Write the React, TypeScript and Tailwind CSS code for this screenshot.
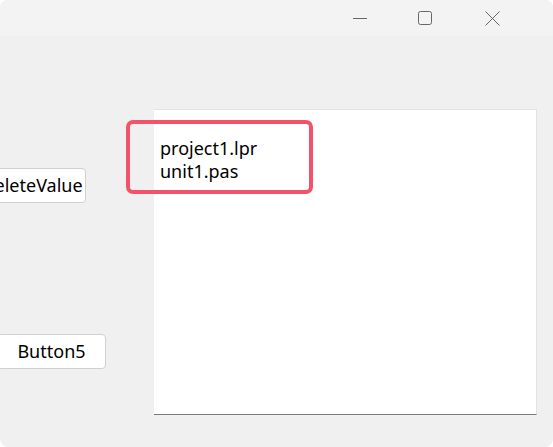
export default function App() {
  return (
    <div className="w-[553px] h-[447px] bg-white" style={{ fontFamily: '"Segoe UI", "Noto Sans", "Liberation Sans", sans-serif' }}>
      <div className="w-full h-full rounded-[8px] overflow-hidden bg-[#f0f0f0] flex flex-col">
        {/* title bar */}
        <div className="h-[36px] bg-[#f3f3f3] flex justify-end items-center shrink-0">
          <div className="w-[46px] h-full flex items-center justify-center">
            <svg width="14" height="14" viewBox="0 0 14 14"><line x1="0" y1="7.5" x2="14" y2="7.5" stroke="#666" strokeWidth="1" /></svg>
          </div>
          <div className="w-[46px] h-full ml-[19px] flex items-center justify-center">
            <svg width="14" height="14" viewBox="0 0 14 14"><rect x="0.5" y="0.5" width="13" height="13" rx="2" fill="none" stroke="#666" strokeWidth="1" /></svg>
          </div>
          <div className="w-[46px] h-full ml-[21px] mr-[38px] flex items-center justify-center">
            <svg width="15" height="15" viewBox="0 0 15 15"><path d="M0.5 0.5 L14.5 14.5 M14.5 0.5 L0.5 14.5" stroke="#666" strokeWidth="1" /></svg>
          </div>
        </div>

        {/* form body */}
        <div className="flex flex-1">
          <div className="w-[154px] shrink-0 flex flex-col">
            <button className="mt-[132px] ml-[-22px] w-[108px] h-[35px] bg-white border border-[#d0d0d0] rounded-[4px] text-[18px] text-black flex items-center justify-center whitespace-nowrap">
              DeleteValue
            </button>
            <button className="mt-[131px] ml-[-3px] w-[109px] h-[35px] bg-white border border-[#d0d0d0] rounded-[4px] text-[18px] text-black flex items-center justify-center">
              Button5
            </button>
          </div>
          <div className="mt-[73px] w-[383px] h-[306px] bg-white border-t border-t-[#e3e3e3] border-r border-r-[#e3e3e3] border-b border-b-[#7a7a7a] relative">
            <div className="pl-[6px] pt-[27px] text-[18px] leading-[23px] text-black">
              <div>project1.lpr</div>
              <div>unit1.pas</div>
            </div>
            <div className="absolute left-[-28px] top-[10px] w-[187px] h-[74px] border-[4px] border-[#f2536a] rounded-[7px]" />
          </div>
        </div>
      </div>
    </div>
  );
}
